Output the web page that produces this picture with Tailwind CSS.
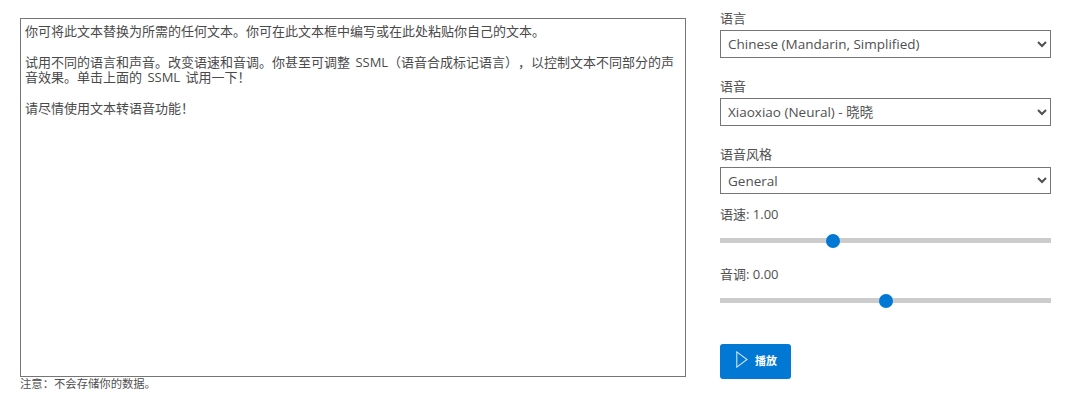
<!DOCTYPE html>
<html lang="zh-CN">
<head>
    <meta charset="UTF-8">
    <title>文本转语音</title>
    <script src="https://cdn.jsdelivr.net/npm/@tailwindcss/browser@4"></script>
</head>
<body class="bg-white text-[#505050] font-['Open_Sans','Noto_Sans_CJK_SC',sans-serif] overflow-hidden">
    <div class="flex w-[1080px] h-[401px] pl-5">
        <!-- Text input -->
        <div class="w-[666px] pt-[18px] mr-[34px]">
            <textarea class="block w-full h-[359px] border border-[#767676] px-1 py-[5px] text-[13px] leading-[15.4px] text-[#4a4a4a] [text-spacing-trim:space-all] [word-spacing:2px] resize-none outline-none">你可将此文本替换为所需的任何文本。你可在此文本框中编写或在此处粘贴你自己的文本。

试用不同的语言和声音。改变语速和音调。你甚至可调整 SSML（语音合成标记语言），以控制文本不同部分的声
音效果。单击上面的 SSML 试用一下！

请尽情使用文本转语音功能！</textarea>
            <p class="text-[11.33px] leading-[14px]">注意：不会存储你的数据。</p>
        </div>

        <!-- Controls -->
        <div class="w-[331px] pt-[10px]">
            <label class="block text-[13px] leading-[17px] mb-[3px]">语言</label>
            <select class="block w-full h-[28px] border border-[#767676] bg-white pl-[3px] text-[13.5px]">
                <option>Chinese (Mandarin, Simplified)</option>
            </select>

            <label class="block text-[13px] leading-[17px] mt-[20px] mb-[3px]">语音</label>
            <select class="block w-full h-[28px] border border-[#767676] bg-white pl-[3px] text-[13.5px]">
                <option>Xiaoxiao (Neural) - 晓晓</option>
            </select>

            <label class="block text-[13px] leading-[17px] mt-[20px] mb-[4px]">语音风格</label>
            <select class="block w-full h-[27px] border border-[#767676] bg-white pl-[3px] text-[13.5px]">
                <option>General</option>
            </select>

            <label class="block text-[13px] leading-[17px] mt-[12px]">语速: 1.00</label>
            <input type="range" min="0" max="3" step="0.01" value="1" class="block w-full h-[5px] mt-[15px] appearance-none bg-[#cccccc] [&::-webkit-slider-thumb]:appearance-none [&::-webkit-slider-thumb]:w-[14px] [&::-webkit-slider-thumb]:h-[14px] [&::-webkit-slider-thumb]:rounded-full [&::-webkit-slider-thumb]:bg-[#0078d4]">

            <label class="block text-[13px] leading-[17px] mt-[23px]">音调: 0.00</label>
            <input type="range" min="-2" max="2" step="0.01" value="0" class="block w-full h-[5px] mt-[15px] appearance-none bg-[#cccccc] [&::-webkit-slider-thumb]:appearance-none [&::-webkit-slider-thumb]:w-[14px] [&::-webkit-slider-thumb]:h-[14px] [&::-webkit-slider-thumb]:rounded-full [&::-webkit-slider-thumb]:bg-[#0078d4]">

            <button class="flex items-center mt-[41px] w-[71px] h-[35px] pl-[16px] gap-[7px] rounded-[3px] bg-[#0078d4] text-white text-[11px] font-bold">
                <svg class="mb-[4px]" width="12" height="17" viewBox="0 0 12 17" fill="none" stroke="#cfe6f8" stroke-width="1.1"><path d="M0.8 0.9 L11 8.5 L0.8 16.1 Z"/></svg>
                <span>播放</span>
            </button>
        </div>
    </div>
</body>
</html>
